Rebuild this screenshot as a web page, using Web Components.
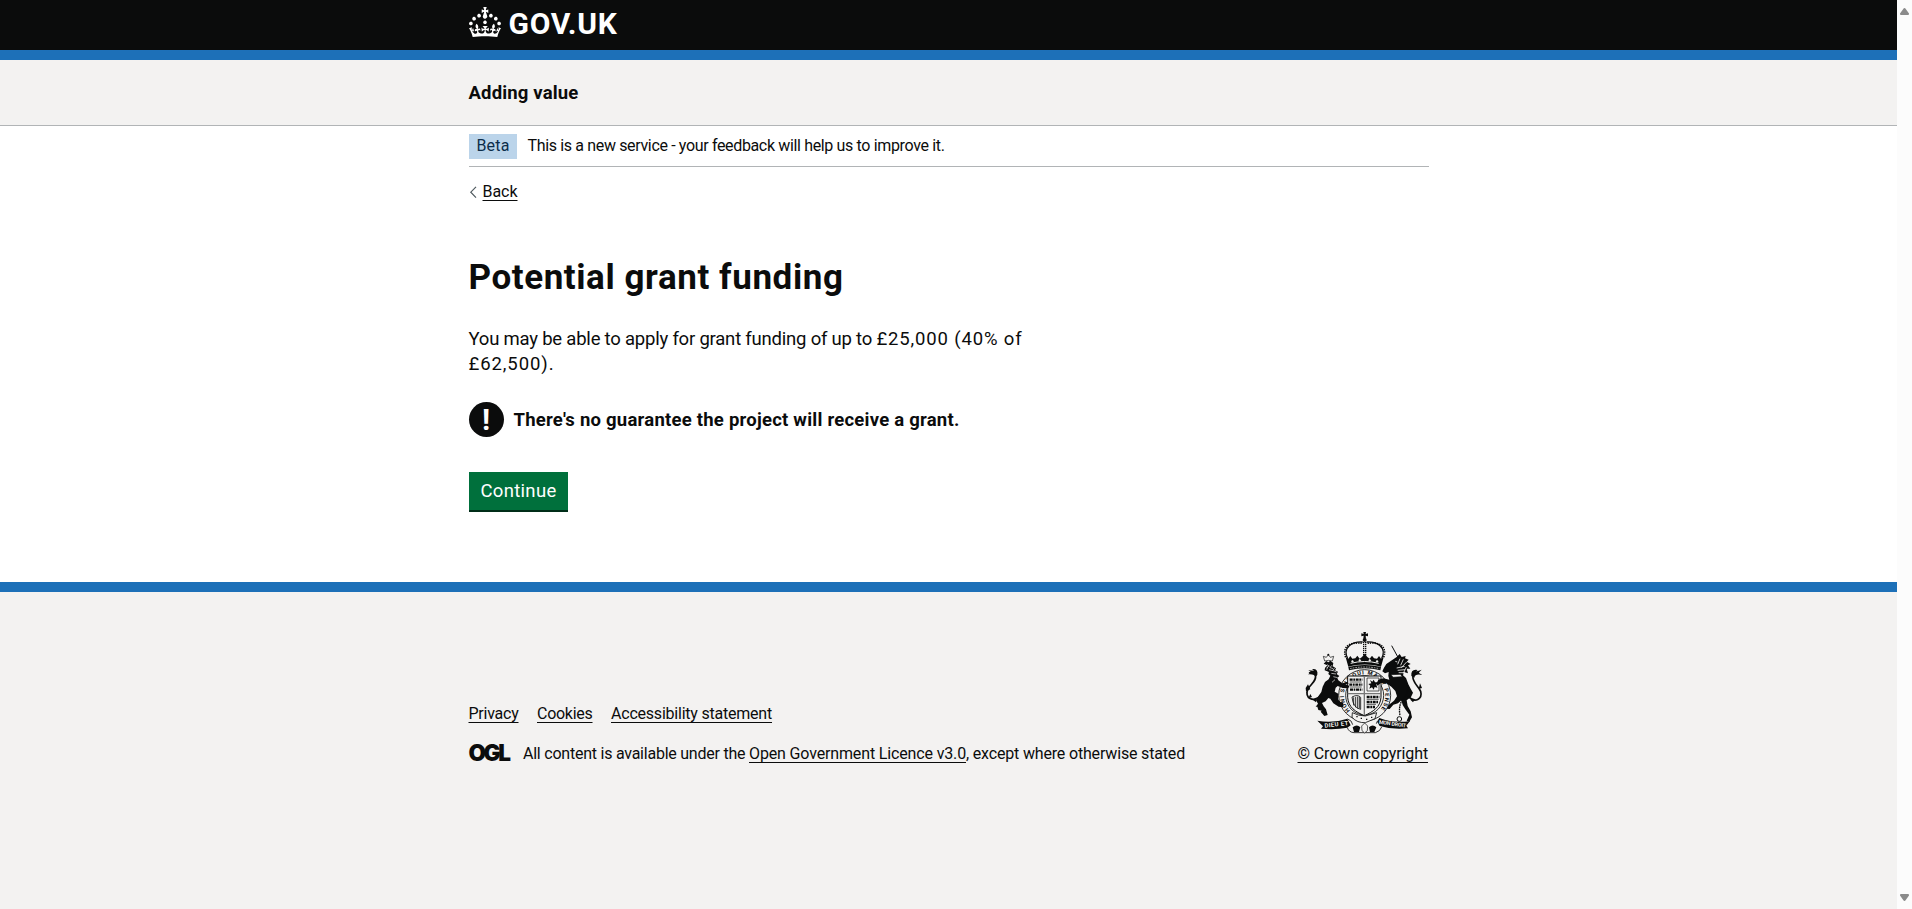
<!DOCTYPE html>
<html lang="en">
<head>
<meta charset="utf-8">
<title>Potential grant funding - Adding value</title>
<style>
html,body{margin:0;height:100%;overflow:hidden}
body{font-family:Roboto,"Liberation Sans",sans-serif;font-size:16px;line-height:20px;color:#0b0c0c;background:#fff}
</style>
</head>
<body>
<gv-app></gv-app>
<script>
const define = (name, html, base = HTMLElement) => {
  const t = document.createElement('template');
  t.innerHTML = html;
  customElements.define(name, class extends base {
    constructor() { super(); this.attachShadow({mode: 'open'}).append(t.content.cloneNode(true)); }
  });
};

/* Text set to a given measure by tracking. */
class Tracked extends HTMLElement {
  connectedCallback() {
    const w = parseFloat(this.getAttribute('w'));
    if (!w || !this.textContent) return;
    this.style.letterSpacing = '0px';
    const natural = this.getBoundingClientRect().width;
    this.style.letterSpacing = ((w - natural) / this.textContent.length).toFixed(4) + 'px';
  }
}
define('gv-text', `<style>:host{display:inline-block;white-space:pre}</style><slot></slot>`, Tracked);
define('gv-link', `<style>:host{display:inline-block;white-space:pre;cursor:pointer;text-decoration:underline;text-decoration-thickness:1px;text-underline-offset:3px;text-decoration-skip-ink:none}</style><slot></slot>`, Tracked);

define('gv-width', `<style>:host{display:block;width:960px;margin:0 auto}</style><slot></slot>`);

define('gv-header', `<style>
:host{display:block;background:#0b0c0c;color:#fff;height:50px;border-bottom:10px solid #1d70b8}
.logo{display:flex;gap:7px;padding-top:7px}
svg{display:block;width:33px;height:30px;fill:#fff}
gv-text{font:700 30px/33px Roboto,sans-serif;padding:0}
</style><gv-width><div class="logo">
<svg viewBox="0 0 33 30"><path d="M22.6 10.4c-1 .4-2-.1-2.4-1-.4-.9.1-2 1-2.4.9-.4 2 .1 2.4 1s-.1 2-1 2.4m-5.9 6.7c-.9.4-2-.1-2.4-1-.4-.9.1-2 1-2.4.9-.4 2 .1 2.4 1s-.1 2-1 2.4m10.8-3.7c-1 .4-2-.1-2.4-1-.4-.9.1-2 1-2.4.9-.4 2 .1 2.4 1s0 2-1 2.4m3.3 4.8c-1 .4-2-.1-2.4-1-.4-.9.1-2 1-2.4.9-.4 2 .1 2.4 1s-.1 2-1 2.4M17 4.7l2.3 1.2V2.5l-2.3.7-.2-.2.9-3h-3.4l.9 3-.2.2c-.1.1-2.3-.7-2.3-.7v3.4L15 4.7c.1.1.1.2.2.2l-1.3 4c-.1.2-.1.4-.1.6 0 1.1.8 2 1.9 2.2h.7c1-.2 1.9-1.1 1.9-2.1 0-.2 0-.4-.1-.6l-1.3-4c-.1-.2 0-.2.1-.3m-7.6 5.7c.9.4 2-.1 2.4-1 .4-.9-.1-2-1-2.4-.9-.4-2 .1-2.4 1s0 2 1 2.4m-5 3c.9.4 2-.1 2.4-1 .4-.9-.1-2-1-2.4-.9-.4-2 .1-2.4 1s.1 2 1 2.4m-3.2 4.8c.9.4 2-.1 2.4-1 .4-.9-.1-2-1-2.4-.9-.4-2 .1-2.4 1s0 2 1 2.4m14.8 11c4.4 0 8.6.3 12.3.8 1.1-4.5 2.4-7 3.7-8.8l-2.5-.9c.2 1.3.3 1.9 0 2.7-.4-.4-.8-1.1-1.1-2.3l-1.2 4c.7-.5 1.3-.8 2-.9-1.1 2.5-2.6 3.1-3.5 3-1.1-.2-1.7-1.2-1.5-2.1.3-1.2 1.5-1.5 2.1-.1 1.1-2.3-.8-3-2-2.3 1.9-1.9 2.1-3.5.6-5.6-2.1 1.6-2.1 3.2-1.2 5.5-1.2-1.4-3.2-.6-2.5 1.6.9-1.4 2.1-.5 1.9.8-.2 1.1-1.7 2.1-3.5 1.9-2.7-.2-2.9-2.1-2.9-3.6.7-.1 1.9.5 2.9 1.9l.4-4.3c-1.1 1.1-2.1 1.4-3.2 1.4.4-1.2 2.1-3 2.1-3h-5.4s1.7 1.9 2.1 3c-1.1 0-2.1-.2-3.2-1.4l.4 4.3c1-1.4 2.2-2 2.9-1.9-.1 1.5-.2 3.4-2.9 3.6-1.9.2-3.4-.8-3.5-1.9-.2-1.3 1-2.2 1.9-.8.7-2.3-1.2-3-2.5-1.6.9-2.2.9-3.9-1.2-5.5-1.5 2-1.3 3.7.6 5.6-1.2-.7-3.1 0-2 2.3.6-1.4 1.8-1.1 2.1.1.2.9-.3 1.9-1.5 2.1-.9.2-2.4-.5-3.5-3 .6 0 1.2.3 2 .9l-1.2-4c-.3 1.1-.7 1.9-1.1 2.3-.3-.8-.2-1.4 0-2.7l-2.9.9C1.3 23 2.6 25.5 3.7 30c3.7-.5 7.9-.8 12.3-.8"/></svg>
<gv-text w="109">GOV.UK</gv-text></div></gv-width>`);

define('gv-service', `<style>
:host{display:block;background:#f3f2f1;height:44px;padding-top:21px;border-bottom:1px solid #b1b4b6;font-weight:700;font-size:18.5px;line-height:25px}
</style><gv-width><gv-text w="110">Adding value</gv-text></gv-width>`);

define('gv-phase', `<style>
:host{display:flex;align-items:flex-start;gap:11px;padding:8px 0 7px;border-bottom:1px solid #b1b4b6}
.tag{box-sizing:border-box;background:#bbd4ea;color:#0c2d4a;height:25px;width:48px;padding:2px 0 0 8px}
.msg{padding-top:2px}
</style><span class="tag"><gv-text w="33">Beta</gv-text></span><span class="msg"><slot></slot></span>`);

define('gv-back', `<style>
:host{display:flex;margin-top:15px;gap:4.5px}
svg{width:9.5px;height:20px;fill:none;stroke:#505a5f;stroke-width:1.2}
</style><svg viewBox="0 0 9.5 20"><path d="M7 4.8L1.8 10.2 7 15.6"/></svg><gv-link w="35">Back</gv-link>`);

define('gv-warning', `<style>
:host{display:flex;gap:10px;margin-top:25px;height:35px;line-height:36px;font-size:18.5px;font-weight:700}
.i{width:35px;height:35px;border-radius:50%;background:#0b0c0c;color:#fff;text-align:center;font-size:30px;line-height:36px}
</style><span class="i">!</span><gv-text w="446">There's no guarantee the project will receive a grant.</gv-text>`);

define('gv-button', `<style>
:host{display:block;box-sizing:border-box;width:99px;height:38px;margin-top:35px;background:#00703c;box-shadow:0 2px 0 #002d18;color:#fff;font-size:18.5px;line-height:39px;padding-left:12px;cursor:pointer}
</style><gv-text w="76">Continue</gv-text>`);

define('gv-main', `<style>
:host{display:block;padding-bottom:72px}
h1{margin:56px 0 0;font-size:35px;line-height:40px;font-weight:700}
p{margin:29px 0 0;font-size:18.5px;line-height:25px}
p span{display:flex}
</style>
<gv-phase><slot name="phase"></slot></gv-phase>
<gv-back></gv-back>
<h1><gv-text w="375">Potential grant funding</gv-text></h1>
<p><span><gv-text w="408">You may be able to apply for grant funding of up to </gv-text><gv-text w="146">£25,000 (40% of</gv-text></span><gv-text w="86">£62,500).</gv-text></p>
<gv-warning></gv-warning>
<gv-button></gv-button>`);

define('gv-arms', `<style>
:host{display:block;width:119px;height:102px}svg{display:block;overflow:visible}
text{font:700 17px Roboto,sans-serif;fill:#0b0c0c}
.w{fill:#f3f2f1}.s{fill:none;stroke:#0b0c0c}.l{fill:none;stroke:#f3f2f1}
</style><svg width="119" height="102" viewBox="75 36 357 306" fill="#0b0c0c">
<defs><path id="garter" d="M210 272 A62 64 0 1 1 298 272"/></defs>
<!-- crown -->
<path d="M250 36h8l-1 6 7-2v9l-7-2 1 9h-8l1-9-7 2v-9l7 2z"/><circle cx="254" cy="60" r="6"/>
<path class="s" stroke-width="4" d="M203 116C186 82 218 64 248 66M305 116C322 82 290 64 260 66"/>
<path class="s" stroke-width="5" stroke-dasharray="4 3" d="M197 112C184 72 222 66 246 70M311 112C324 72 286 66 262 70"/>
<path class="s" stroke-width="4" stroke-dasharray="4 2" d="M251 66v42M257 66v42"/>
<path d="M197 112l8 4 6-8 6 8 9-1 6-8 7 9 7-5 8-10 8 10 7 5 7-9 6 8 9 1 6-8 6 8 8-4-8 28c-32-9-66-9-98 0z"/>
<path class="l" stroke-width="3" d="M212 130q42-11 84 0"/><path class="w" d="M217 120l5 4-5 4-4-4zM239 117l5 4-5 4-4-4zM269 117l5 4-5 4-4-4zM291 120l5 4-5 4-4-4z"/>
<path d="M205 141q49-12 98 0l-2 10q-47-12-94 0z"/><path class="l" stroke-width="2" stroke-dasharray="5 3" d="M210 146q44-10 88 0"/>
<!-- garter and shield -->
<ellipse cx="254" cy="226" rx="78" ry="77" class="w" stroke="#0b0c0c" stroke-width="2.5"/>
<ellipse cx="254" cy="226" rx="57" ry="59" class="s" stroke-width="2.5"/>
<text><textPath href="#garter" textLength="290">HONI SOIT QUI MAL Y PENSE</textPath></text>
<path class="w" stroke="#0b0c0c" stroke-width="3" d="M203 168H303V232C301 262 279 275 253 287C226 275 205 262 203 232z"/>
<path d="M251 168h4v118h-4zM203 219h100v4H203z" fill="#777"/>
<path class="s" stroke-width="7" stroke-dasharray="9 2 5 2" d="M209 179h38M208 194h39M210 209h37M260 231h38M260 246h36M260 261h25"/>
<path class="s" stroke-width="2" d="M209 186h36M209 201h36M260 238h36M260 253h28M261 174h36v39h-36z"/>
<path d="M270 180l7 5 4-6 4 8 9 0-5 7 3 9-8-2-3 8-5-7-8 4 3-9-6-5 9-2z"/>
<path class="s" stroke-width="2.5" d="M216 231q17-9 26 1v36q-23-4-26-37M221 232v24M227 231v31M233 230v35M238 231v34"/>
<path class="w" stroke="#0b0c0c" stroke-width="2.5" d="M217 278q18 10 39 10l34-10-5 18-29 12q-25 1-40-16z"/><path d="M229 288h4v4h-4zM242 293h4v4h-4zM258 296h4v4h-4zM273 290h4v4h-4z"/>
<!-- lion -->
<path d="M131 131l8-8 6 4 6-5 9 7-2 10 10 6-3 6 9 4-4 7 8 6-6 6 3 7 12 9 15-5 4 6-10 1 12 6-3 7-17-1-15-6-6 5-3 12 11 6-1 17 6 7 10 5-1 12-13-2-16-10-9-14-6-2-8 10-11 5 5 10 7 9 5 17-10 3-11-13 3-3-10-2-3-10-5 0 7-9-6-10 8-14 8-11 4-16 7-14 11-8 5-11-6-5 2-6-13-5 1-7 7-8z"/>
<path class="s" stroke-width="5" d="M125 224C100 252 71 232 84 207C92 192 111 184 106 164Q103 153 87 159"/>
<path d="M112 164q3-19-16-17l6 5-17-1 9 6-10 6q20-2 23 9zM84 193l-7 11 1 10 13-6zM91 222l-6 13 11-4zM96 238l12 9 2-10z"/>
<path class="w" stroke="#0b0c0c" stroke-width="2" d="M130 109l9 3 6-8 6 8 10-3-4 14q-12-4-23 0z"/><circle cx="145" cy="104" r="3"/>
<path class="l" stroke-width="2" d="M141 134l7 4-8 5M155 136l-5 7 10 3M147 149l12 3M164 145l-6 6 12 5M154 160l14 2M160 170l13 3M165 179l-9 8M143 141l-3 8"/>
<!-- unicorn -->
<path class="s" stroke-width="3" d="M335 77l19 35"/><path d="M350 111l9-9 6 9 12-3-2 7 11 4-6 6 12 7-8 4 7 10-11 0 4 14-12-4-3 10 9 8 7 19 7 13 7 12-6 13-13 10 3 17 9 16 4 18-8 13-8-3 8-18-12-16-8-13-4-14-10 9-14 4-11 13-9-1 7-12 15-12 9-13-5-16-12-13-15-10-16-1-11 8-2-7 5-11 15-4 18 4-3-11 1-12-11 4-8-6 5-11 7-11z"/>
<path class="l" stroke-width="2.5" d="M346 124l6 2M360 116l-7 17M370 118l-8 18M380 126l-16 17M350 144l24-5M353 151l22-2M356 158l18 0M379 141l-9 19"/>
<path class="s" stroke-width="5" d="M385 229C405 251 428 237 422 214C416 198 395 187 399 166Q402 155 417 158"/>
<path d="M394 168q-2-22 19-18l-6 5 18-6-9 9 11 7q-22-5-24 8zM420 190l6 14-10 3zM405 238l-6 9-8-8z"/>
<path class="w" stroke="#0b0c0c" stroke-width="2" d="M333 164l28-1 6 7-28 2z"/>
<path class="s" stroke-width="4" stroke-dasharray="5 2" d="M380 189q10 24-8 45-18 18-12 53"/><circle cx="358" cy="297" r="7" class="s" stroke-width="3"/>
<!-- motto -->
<path d="M112 302q46 9 90-6l10 20-10 7q-35 7-79 3l6-7zM298 294q46 17 92 9l-11 14 5 8q-46 5-85-7l-7-12z"/>
<g transform="translate(134 323) rotate(-6)"><text style="font-size:18px;fill:#f3f2f1" textLength="72">DIEU ET</text></g>
<g transform="translate(296 311) rotate(8)"><text style="font-size:16px;fill:#f3f2f1" textLength="82">MON DROIT</text></g>
<path class="s" stroke-width="2.5" d="M202 323q5 14 20 15h64q15-4 19-17M203 297q13 4 15 17M300 296q-10 7-11 15"/>
<path d="M218 322q13-11 23 0l-4 14h-15zM267 322q11-11 22 0l-6 14h-13z"/><path class="w" stroke="#0b0c0c" stroke-width="2" d="M245 318l9-9 9 9-1 14-8 7-8-7z"/>
</svg>`);

define('gv-footer', `<style>
:host{display:block;background:#f3f2f1;border-top:10px solid #1d70b8;padding-top:40px}
.row{display:flex;justify-content:space-between;align-items:flex-end}
.left{display:grid;gap:20px}.links{display:flex;gap:18.5px}.lic{display:flex}
.ogl{font:900 22.5px/18px Inter,sans-serif;width:54.5px}
.right{display:flex;flex-direction:column;align-items:flex-start;gap:10px;width:131px}gv-arms{margin-left:7.5px}
</style><gv-width><div class="row"><div class="left">
<div class="links"><gv-link w="50">Privacy</gv-link><gv-link w="55.5">Cookies</gv-link><gv-link w="161">Accessibility statement</gv-link></div>
<div class="lic"><span class="ogl"><gv-text w="40">OGL</gv-text></span><gv-text w="226">All content is available under the </gv-text><gv-link w="217">Open Government Licence v3.0</gv-link><gv-text w="219">, except where otherwise stated</gv-text></div>
</div><div class="right"><gv-arms></gv-arms><gv-link w="130.5">© Crown copyright</gv-link></div></div></gv-width>`);

define('gv-scrollbar', `<style>
:host{display:flex;flex-direction:column;justify-content:space-between;background:#fcfcfc;padding:8px 3px;box-sizing:border-box}
svg{display:block;width:9px;height:7px;fill:#8b8b8b}
</style><svg viewBox="0 0 9 7"><path d="M4.5 0q.7 0 1.1.7L9 5.5Q9.2 7 8 7H1Q-.2 7 0 5.5L3.4.7Q3.8 0 4.5 0"/></svg><svg viewBox="0 0 9 7"><path d="M4.5 7q.7 0 1.1-.7L9 1.5Q9.2 0 8 0H1Q-.2 0 0 1.5l3.4 4.8q.4.7 1.1.7"/></svg>`);

define('gv-app', `<style>
:host{display:grid;grid-template-columns:1fr 15px;height:909px}
.page{display:flex;flex-direction:column}gv-footer{flex:1}
</style><div class="page"><gv-header></gv-header><gv-service></gv-service>
<gv-width><gv-main><gv-text slot="phase" w="417">This is a new service - your feedback will help us to improve it.</gv-text></gv-main></gv-width>
<gv-footer></gv-footer></div><gv-scrollbar></gv-scrollbar>`);
</script>
</body>
</html>
